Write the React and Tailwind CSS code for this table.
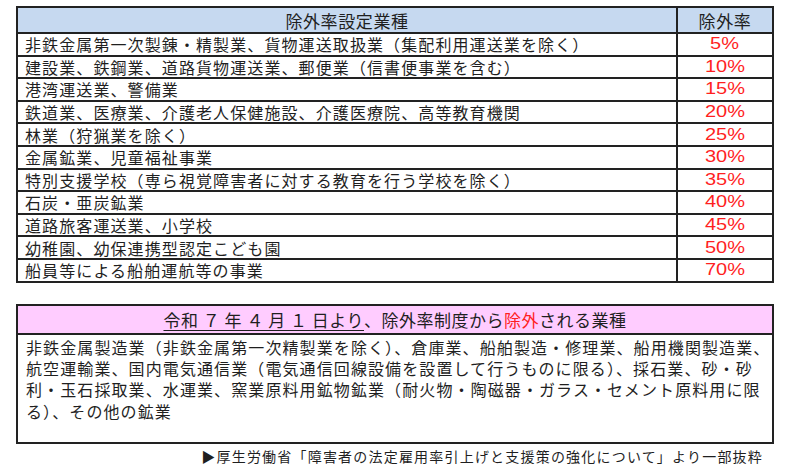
import React from 'react';

const rows = [
    ['非鉄金属第一次製錬・精製業、貨物運送取扱業（集配利用運送業を除く）', '5%'],
    ['建設業、鉄鋼業、道路貨物運送業、郵便業（信書便事業を含む）', '10%'],
    ['港湾運送業、警備業', '15%'],
    ['鉄道業、医療業、介護老人保健施設、介護医療院、高等教育機関', '20%'],
    ['林業（狩猟業を除く）', '25%'],
    ['金属鉱業、児童福祉事業', '30%'],
    ['特別支援学校（専ら視覚障害者に対する教育を行う学校を除く）', '35%'],
    ['石炭・亜炭鉱業', '40%'],
    ['道路旅客運送業、小学校', '45%'],
    ['幼稚園、幼保連携型認定こども園', '50%'],
    ['船員等による船舶運航等の事業', '70%'],
];

const jp = "font-['Noto_Sans_CJK_JP',sans-serif]";

const App = () => {
    return (
        <div className={`w-[790px] h-[469px] bg-white pl-[16px] pt-[6px] text-[#1f1f1f] ${jp}`}>
            {/* 除外率設定業種の表 */}
            <div className="w-[758px] border-2 border-[#222]">
                <div className="flex h-[26px] border-b-2 border-[#222] bg-[#c6d9f0] text-[17px] leading-none">
                    <div className="w-[658px] flex items-center justify-center tracking-[0.6px]">除外率設定業種</div>
                    <div className="flex-1 flex items-center justify-center border-l-2 border-[#222] tracking-[0.6px]">除外率</div>
                </div>
                {rows.map(([name, rate], i) => (
                    <div
                        key={i}
                        className="flex h-[22.6px] border-b-2 border-[#222] last:border-b-0 last:h-[20.8px] text-[16px] leading-none"
                    >
                        <div className="w-[658px] flex items-center pl-[7px] tracking-[1.1px] whitespace-nowrap">{name}</div>
                        <div className="flex-1 flex items-center justify-center border-l-2 border-[#222]">
                            <span className="inline-block scale-x-[1.25] font-['Liberation_Sans',sans-serif] text-[16px] text-[#ff1f1f]">{rate}</span>
                        </div>
                    </div>
                ))}
            </div>

            {/* 除外される業種 */}
            <div className="w-[758px] mt-[21px] border-2 border-[#222]">
                <div className="h-[29px] border-b-2 border-[#222] bg-[#ffccff] flex items-center justify-center text-[17px] leading-none tracking-[0.5px] whitespace-nowrap">
                    <span className="underline underline-offset-[3px] decoration-[1px]">令和 ７ 年 ４ 月 １ 日より</span>
                    <span>、除外率制度から</span>
                    <span className="text-[#ff1f1f]">除外</span>
                    <span>される業種</span>
                </div>
                <div className="h-[107px] pl-[8px] pt-[2px] text-[16px] leading-[21.3px] tracking-[1.1px] whitespace-nowrap">
                    非鉄金属製造業（非鉄金属第一次精製業を除く）、倉庫業、船舶製造・修理業、船用機関製造業、<br />
                    航空運輸業、国内電気通信業（電気通信回線設備を設置して行うものに限る）、採石業、砂・砂<br />
                    利・玉石採取業、水運業、窯業原料用鉱物鉱業（耐火物・陶磁器・ガラス・セメント原料用に限<br />
                    る）、その他の鉱業
                </div>
            </div>

            <div className="w-[758px] mt-[2px] pr-[11px] text-right text-[14px] leading-[20px] tracking-[1.2px] whitespace-nowrap">
                ▶厚生労働省「障害者の法定雇用率引上げと支援策の強化について」より一部抜粋
            </div>
        </div>
    );
};

export default App;
